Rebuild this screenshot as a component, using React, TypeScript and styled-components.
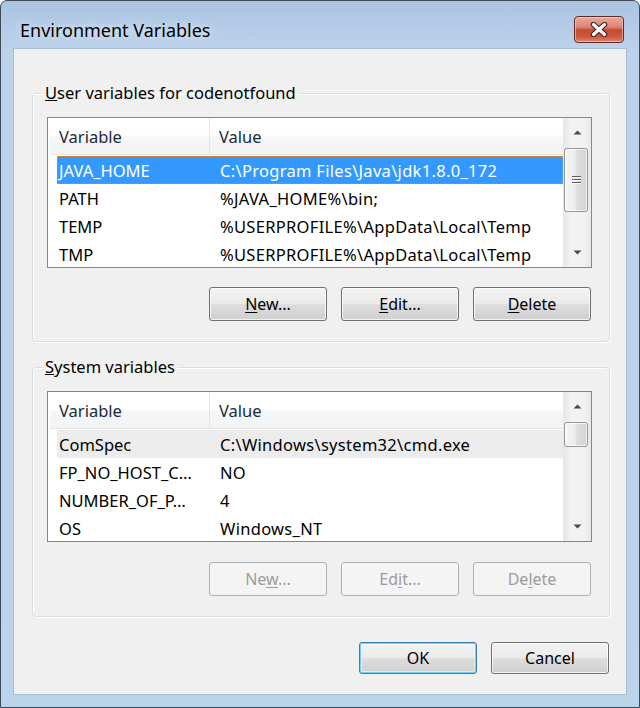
import React from 'react';
import styled, { createGlobalStyle, css } from 'styled-components';

const GlobalStyle = createGlobalStyle`
  html, body {
    margin: 0;
    padding: 0;
    background: #ffffff;
  }
  * {
    box-sizing: border-box;
  }
`;

const font = `"Noto Sans", "Open Sans", "DejaVu Sans", sans-serif`;

const Window = styled.div`
  width: 640px;
  height: 708px;
  display: flex;
  flex-direction: column;
  border: 1px solid #3f4a57;
  border-radius: 7px 7px 0 0;
  background: linear-gradient(to bottom, #abc4e2 0px, #bcd2eb 48px, #bcd3ec 100%);
  font-family: ${font};
  color: #000;
  overflow: hidden;
`;

const TitleBar = styled.div`
  height: 47px;
  flex: none;
  display: flex;
  align-items: center;
  justify-content: space-between;
  padding: 10px 15px 0 19px;
`;

const Title = styled.div`
  font-size: 18px;
  color: #000;
  text-shadow: 0 0 8px rgba(255, 255, 255, 0.9);
`;

const CloseButton = styled.div`
  width: 50px;
  height: 27px;
  border: 1px solid #5b2b2b;
  border-radius: 4px;
  box-shadow: inset 0 0 0 1px rgba(255, 220, 210, 0.55);
  background: linear-gradient(
    to bottom,
    #eaaa9c 0%,
    #dc8474 40%,
    #c64a33 52%,
    #cd5a3f 80%,
    #e0896a 100%
  );
  display: flex;
  align-items: center;
  justify-content: center;
`;

const Client = styled.div`
  flex: 1;
  margin: 0 12px 12px 12px;
  background: #f0f0f0;
  border: 1px solid #a9bdd6;
  padding: 34px 16px 0 18px;
  display: flex;
  flex-direction: column;
`;

const Group = styled.fieldset<{ $gap?: number }>`
  margin: ${(p) => p.$gap ?? 0}px 0 0 0;
  padding: 14px 17px 20px 14px;
  border: 1px solid #d5dfe5;
  border-radius: 4px;
  box-shadow: inset 1px 1px 0 #ffffff, 1px 1px 0 #ffffff;
  min-width: 0;
`;

const Legend = styled.legend`
  font-size: 16.5px;
  line-height: 20px;
  padding: 0 3px;
  margin-left: -5px;
`;

const ListBox = styled.div`
  height: 151px;
  border: 1px solid #828790;
  background: #ffffff;
  display: flex;
`;

const ListBody = styled.div`
  flex: 1;
  padding-left: 2px;
  font-size: 16.5px;
  overflow: hidden;
`;

const Header = styled.div`
  height: 37px;
  display: grid;
  grid-template-columns: 160px 1fr;
  background: linear-gradient(to bottom, #ffffff 0%, #ffffff 45%, #f5f6f7 55%, #f2f3f4 100%);
  border-bottom: 1px solid #e5e5e5;
  margin-bottom: 1px;
`;

const HeaderCell = styled.div<{ $divider?: boolean }>`
  display: flex;
  align-items: center;
  padding-left: 9px;
  color: #1e2a38;
  border-right: ${(p) => (p.$divider ? '1px solid #e3e6ea' : 'none')};
`;

const Row = styled.div<{ $state?: 'focused' | 'inactive' }>`
  height: 28px;
  margin-left: 7px;
  display: grid;
  grid-template-columns: 161px 1fr;
  align-items: center;
  white-space: nowrap;
  border: 1px solid transparent;
  ${(p) =>
    p.$state === 'focused' &&
    css`
      background: #3399ff;
      color: #ffffff;
      border: 1px dotted #d78a3a;
    `}
  ${(p) =>
    p.$state === 'inactive' &&
    css`
      background: #ececec;
    `}
`;

const Cell = styled.div<{ $wide?: boolean }>`
  padding-left: 1px;
  overflow: hidden;
  letter-spacing: ${(p) => (p.$wide ? '0.3px' : '0')};
`;

const ScrollBar = styled.div`
  width: 28px;
  flex: none;
  display: flex;
  flex-direction: column;
  background: linear-gradient(to right, #e6e6e6, #f2f2f2 30%, #f2f2f2 70%, #e9e9e9);
`;

const ArrowButton = styled.div`
  height: 29px;
  flex: none;
  display: flex;
  align-items: center;
  justify-content: center;
`;

const Track = styled.div`
  flex: 1;
  padding: 1px 3px 0 1px;
`;

const Thumb = styled.div<{ $height: number }>`
  height: ${(p) => p.$height}px;
  border: 1px solid #979797;
  border-radius: 3px;
  background: linear-gradient(to right, #f6f6f6 0%, #ececec 45%, #dcdcdc 55%, #d4d4d4 100%);
  box-shadow: inset 0 0 0 1px rgba(255, 255, 255, 0.7);
  display: flex;
  align-items: center;
  justify-content: center;
`;

const ButtonRow = styled.div<{ $top: number }>`
  display: flex;
  justify-content: flex-end;
  gap: 14px;
  margin-top: ${(p) => p.$top}px;
  padding-right: 1px;
`;

const Button = styled.div<{ $disabled?: boolean; $default?: boolean; $h?: number }>`
  width: 118px;
  height: ${(p) => p.$h ?? 34}px;
  display: flex;
  align-items: center;
  justify-content: center;
  font-size: 16px;
  border: 1px solid #707070;
  border-radius: 3px;
  background: linear-gradient(to bottom, #f2f2f2 0%, #ebebeb 48%, #dddddd 52%, #cfcfcf 100%);
  box-shadow: inset 0 0 0 1px rgba(255, 255, 255, 0.75);
  color: #000;

  u {
    text-decoration-thickness: 1px;
    text-underline-offset: 2px;
  }

  ${(p) =>
    p.$disabled &&
    css`
      border-color: #adb2b5;
      background: #f4f4f4;
      color: #9c9c9c;
      box-shadow: none;
    `}
  ${(p) =>
    p.$default &&
    css`
      border-color: #3c7fb1;
      box-shadow: inset 0 0 0 1px #6fd0f5, inset 0 0 0 2px rgba(255, 255, 255, 0.5);
    `}
`;

const Footer = styled.div`
  display: flex;
  justify-content: flex-end;
  gap: 14px;
  margin-top: 25px;
  padding-right: 1px;
`;

const UpArrow = () => (
  <svg width="9" height="5" viewBox="0 0 9 5">
    <path d="M0.5 4.5 L4.5 0.5 L8.5 4.5 Z" fill="#4a4a4a" />
  </svg>
);

const DownArrow = () => (
  <svg width="9" height="5" viewBox="0 0 9 5">
    <path d="M0.5 0.5 L4.5 4.5 L8.5 0.5 Z" fill="#4a4a4a" />
  </svg>
);

const Grip = () => (
  <svg width="9" height="8" viewBox="0 0 9 8">
    <path d="M0 0.5 H9 M0 3.5 H9 M0 6.5 H9" stroke="#5d5d5d" strokeWidth="1" />
    <path d="M0 1.5 H9 M0 4.5 H9 M0 7.5 H9" stroke="#ffffff" strokeWidth="1" />
  </svg>
);

const CloseGlyph = () => (
  <svg width="18" height="15" viewBox="0 0 18 15">
    <path d="M3.5 2.5 L14.5 12.5 M14.5 2.5 L3.5 12.5" stroke="#4a2020" strokeWidth="5.5" strokeLinecap="round" />
    <path d="M3.5 2.5 L14.5 12.5 M14.5 2.5 L3.5 12.5" stroke="#ffffff" strokeWidth="3.2" strokeLinecap="round" />
  </svg>
);

type VarRow = {
  name: string;
  value: string;
  state?: 'focused' | 'inactive';
};

const userVars: VarRow[] = [
  { name: 'JAVA_HOME', value: 'C:\\Program Files\\Java\\jdk1.8.0_172', state: 'focused' },
  { name: 'PATH', value: '%JAVA_HOME%\\bin;' },
  { name: 'TEMP', value: '%USERPROFILE%\\AppData\\Local\\Temp' },
  { name: 'TMP', value: '%USERPROFILE%\\AppData\\Local\\Temp' },
];

const systemVars: VarRow[] = [
  { name: 'ComSpec', value: 'C:\\Windows\\system32\\cmd.exe', state: 'inactive' },
  { name: 'FP_NO_HOST_C…', value: 'NO' },
  { name: 'NUMBER_OF_P…', value: '4' },
  { name: 'OS', value: 'Windows_NT' },
];

interface VariableListProps {
  rows: VarRow[];
  thumbHeight: number;
  grip?: boolean;
}

const VariableList = ({ rows, thumbHeight, grip }: VariableListProps) => (
  <ListBox>
    <ListBody>
      <Header>
        <HeaderCell $divider>Variable</HeaderCell>
        <HeaderCell>Value</HeaderCell>
      </Header>
      {rows.map((row) => (
        <Row key={row.name} $state={row.state}>
          <Cell>{row.name}</Cell>
          <Cell $wide>{row.value}</Cell>
        </Row>
      ))}
    </ListBody>
    <ScrollBar>
      <ArrowButton>
        <UpArrow />
      </ArrowButton>
      <Track>
        <Thumb $height={thumbHeight}>{grip && <Grip />}</Thumb>
      </Track>
      <ArrowButton>
        <DownArrow />
      </ArrowButton>
    </ScrollBar>
  </ListBox>
);

const App = () => {
  return (
    <>
      <GlobalStyle />
      <Window>
        <TitleBar>
          <Title>Environment Variables</Title>
          <CloseButton>
            <CloseGlyph />
          </CloseButton>
        </TitleBar>
        <Client>
          <Group>
            <Legend>
              <u>U</u>ser variables for codenotfound
            </Legend>
            <VariableList rows={userVars} thumbHeight={64} grip />
            <ButtonRow $top={19}>
              <Button>
                <span>
                  <u>N</u>ew...
                </span>
              </Button>
              <Button>
                <span>
                  <u>E</u>dit...
                </span>
              </Button>
              <Button>
                <span>
                  <u>D</u>elete
                </span>
              </Button>
            </ButtonRow>
          </Group>
          <Group $gap={15}>
            <Legend>
              <u>S</u>ystem variables
            </Legend>
            <VariableList rows={systemVars} thumbHeight={25} />
            <ButtonRow $top={20}>
              <Button $disabled>
                <span>
                  Ne<u>w</u>...
                </span>
              </Button>
              <Button $disabled>
                <span>
                  Ed<u>i</u>t...
                </span>
              </Button>
              <Button $disabled>
                <span>
                  De<u>l</u>ete
                </span>
              </Button>
            </ButtonRow>
          </Group>
          <Footer>
            <Button $default $h={32}>
              OK
            </Button>
            <Button $h={32}>Cancel</Button>
          </Footer>
        </Client>
      </Window>
    </>
  );
};

export default App;
